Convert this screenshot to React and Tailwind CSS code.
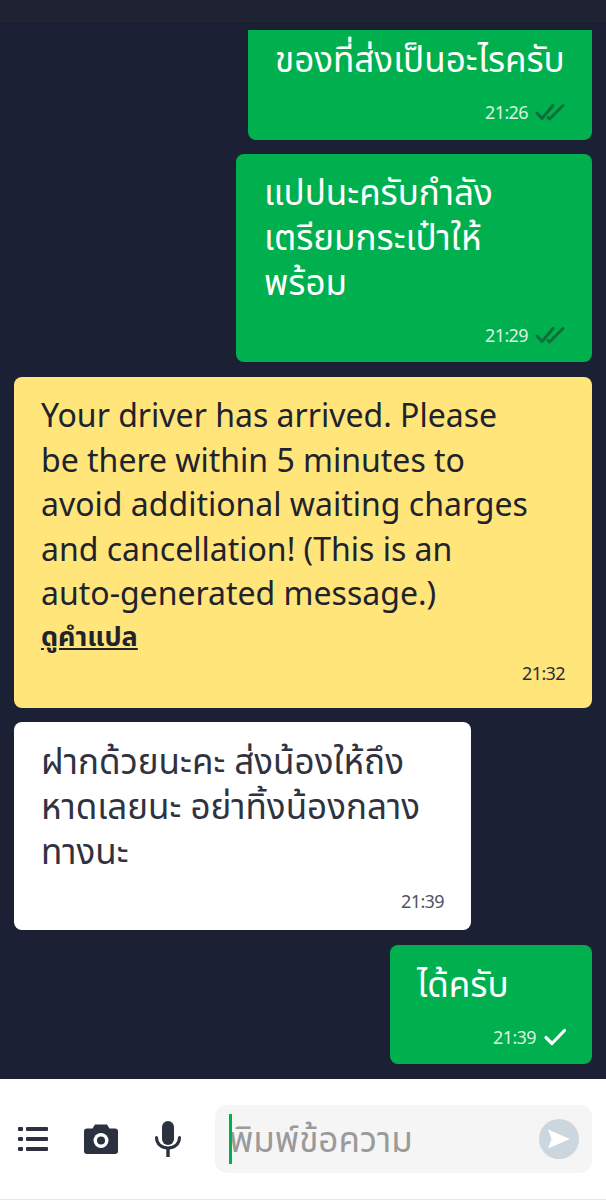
const font = { fontFamily: '"Noto Sans", "Noto Sans Thai", "Open Sans", "DejaVu Sans", sans-serif' };

function DoubleCheck() {
  return (
    <svg width="30" height="18" viewBox="0 0 30 18" fill="none" stroke="#0c6e3a" strokeWidth="3" strokeLinecap="round" strokeLinejoin="round">
      <path d="M2 10l5 5.500L18 2.500" />
      <path d="M13 14.500l1.500 1.500L28 2.500" />
    </svg>
  );
}

function Check() {
  return (
    <svg width="24" height="18" viewBox="0 0 24 18" fill="none" stroke="#fff" strokeWidth="3.200" strokeLinecap="round" strokeLinejoin="round">
      <path d="M3 9.500l6 6L21.500 2.500" />
    </svg>
  );
}

function Meta({ time, children, color = 'text-[#d9f3e2]' }) {
  return (
    <div className={`flex items-center justify-end gap-[7px] text-[18px] leading-[24px] tracking-[-0.6px] ${color}`}>
      <span>{time}</span>
      {children}
    </div>
  );
}

export default function App() {
  return (
    <div style={font} className="w-[606px] h-[1200px] flex flex-col bg-[#1c2035] overflow-hidden">
      <div className="h-[24px] shrink-0 bg-[#1e2232] border-b border-[#191c2c]" />
      <div className="flex-1 flex flex-col items-end pl-[14px] pr-[14px] pt-[6px]">
        <div className="w-[344px] h-[110px] bg-[#00b04f] rounded-b-[8px] pl-[27px] pr-[27px] pt-[6px] flex flex-col justify-between pb-[16px]">
          <div className="text-white text-[35px] leading-[45px] whitespace-nowrap">ของที่ส่งเป็นอะไรครับ</div>
          <Meta time="21:26"><DoubleCheck /></Meta>
        </div>
        <div className="mt-[14px] w-[356px] h-[208px] bg-[#00b04f] rounded-[8px] pl-[28px] pr-[27px] pt-[15px] pb-[15px] flex flex-col justify-between">
          <div className="text-white text-[35px] leading-[45px] whitespace-nowrap">แปปนะครับกำลัง<br />เตรียมกระเป๋าให้<br />พร้อม</div>
          <Meta time="21:29"><DoubleCheck /></Meta>
        </div>
        <div className="mt-[15px] w-[578px] h-[331px] bg-[#ffe57a] rounded-[8px] pl-[27px] pr-[27px] pt-[16px] pb-[23px] flex flex-col justify-between text-[#20222e]">
          <div>
            <div className="text-[32px] leading-[44.500px] whitespace-nowrap">Your driver has arrived. Please<br />be there within 5 minutes to<br />avoid additional waiting charges<br />and cancellation! (This is an<br />auto-generated message.)</div>
            <div className="text-[27px] leading-[32px] font-bold underline mt-[4px]">ดูคำแปล</div>
          </div>
          <Meta time="21:32" color="text-[#2b2d38]" />
        </div>
        <div className="mt-[14px] self-start w-[457px] h-[208px] bg-white rounded-[8px] pl-[27px] pr-[27px] pt-[16px] pb-[17px] flex flex-col justify-between">
          <div className="text-[#30333f] text-[35px] leading-[45px] whitespace-nowrap">ฝากด้วยนะคะ ส่งน้องให้ถึง<br />หาดเลยนะ อย่าทิ้งน้องกลาง<br />ทางนะ</div>
          <Meta time="21:39" color="text-[#50535e]" />
        </div>
        <div className="mt-[15px] w-[202px] h-[119px] bg-[#00b04f] rounded-[8px] pl-[27px] pr-[25px] pt-[16px] pb-[15px] flex flex-col justify-between">
          <div className="text-white text-[35px] leading-[45px]">ได้ครับ</div>
          <Meta time="21:39"><Check /></Meta>
        </div>
      </div>
      <div className="h-[121px] shrink-0 bg-white border-b border-[#e5e7ea] flex items-center pl-[17px] pr-[14px]">
        <div className="flex items-center w-[198px] shrink-0">
          <svg width="32" height="30" viewBox="0 0 32 30" fill="#2c3140" className="mr-[34px]">
            <rect x="1" y="3" width="5" height="4" rx="1" />
            <rect x="9" y="3" width="22" height="4" rx="1" />
            <rect x="1" y="13" width="5" height="4" rx="1" />
            <rect x="9" y="13" width="22" height="4" rx="1" />
            <rect x="1" y="23" width="5" height="4" rx="1" />
            <rect x="9" y="23" width="22" height="4" rx="1" />
          </svg>
          <svg width="36" height="32" viewBox="0 0 36 32" className="mr-[35px]">
            <path fill="#2c3140" d="M12 1.500h12l2.500 4H32a3 3 0 0 1 3 3V28a3 3 0 0 1-3 3H4a3 3 0 0 1-3-3V8.500a3 3 0 0 1 3-3h5.500z" />
            <circle cx="18" cy="17.500" r="7.500" fill="#fff" />
            <circle cx="18" cy="17.500" r="4" fill="#2c3140" />
          </svg>
          <svg width="28" height="36" viewBox="0 0 28 36" fill="none">
            <rect x="8" y="0" width="12" height="24" rx="6" fill="#2c3140" />
            <path d="M2.500 16.500c0 6.500 5 10.500 11.500 10.500s11.500-4 11.500-10.500" stroke="#2c3140" strokeWidth="3" strokeLinecap="round" />
            <rect x="12.300" y="26" width="3.400" height="10" fill="#2c3140" />
          </svg>
        </div>
        <div className="relative flex-1 h-[68px] bg-[#f5f5f5] rounded-[12px] flex items-center justify-between pl-[14px] pr-[13px]">
          <div className="absolute left-[14px] top-[9px] w-[3px] h-[50px] bg-[#00b04f]" />
          <span className="text-[35px] leading-[44px] text-[#9a9a9a]">พิมพ์ข้อความ</span>
          <div className="w-[40px] h-[40px] rounded-full bg-[#ccd6de] flex items-center justify-center">
            <svg width="24" height="22" viewBox="0 0 24 22" fill="#fff"><path d="M1 1.500L23 11 1 20.500l3.500-9.500z" /></svg>
          </div>
        </div>
      </div>
    </div>
  );
}
